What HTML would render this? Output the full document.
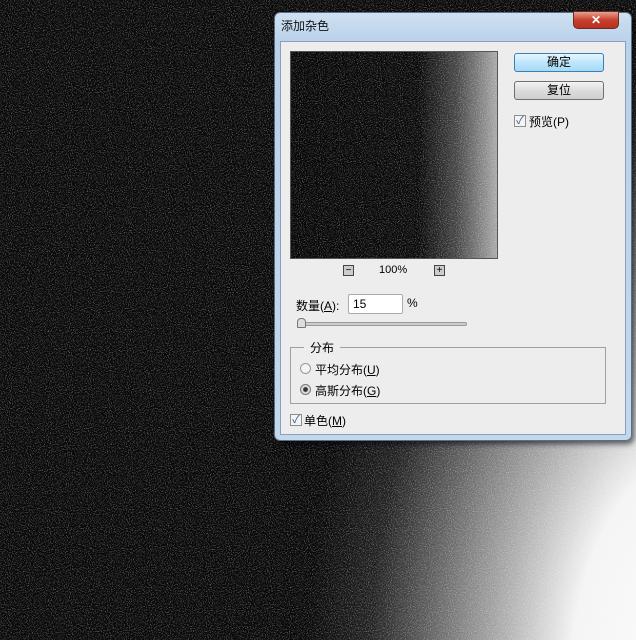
<!DOCTYPE html>
<html><head><meta charset="utf-8"><style>
*{margin:0;padding:0;box-sizing:border-box}
html,body{width:636px;height:640px;overflow:hidden}
body{position:relative;background:#0a0a0a;font-family:"Liberation Sans","Noto Sans CJK SC",sans-serif;font-size:12px;color:#000}
#bg{position:absolute;left:0;top:0;width:636px;height:640px;background:radial-gradient(ellipse 450px 720px at 720px 680px,#fff 0%,#f4f4f4 33%,#888 57%,#222 78%,#080808 92%)}
svg.noise{position:absolute;left:0;top:0}
.dlg{position:absolute;left:274px;top:12px;width:358px;height:429px;border-radius:6px;background:linear-gradient(#cfe0f1,#b9d1ea 30px,#c4d8ed);border:1px solid #5a6f86;box-shadow:2px 3px 6px rgba(0,0,0,.6)}
.title{position:absolute;left:6px;top:4px;font-size:12px;color:#111}
.close{position:absolute;left:298px;top:-2px;width:46px;height:18px;border-radius:0 0 5px 5px;background:linear-gradient(#e8a090,#c7402a 50%,#b83020);border:1px solid #6b2a20;color:#fff;text-align:center;font-weight:bold;font-size:12px;line-height:16px}
.client{position:absolute;left:5px;top:28px;width:346px;height:394px;background:#ededed;border:1px solid #8aa0b8}
.preview{position:absolute;left:9px;top:9px;width:208px;height:208px;border:1px solid #555;background:linear-gradient(90deg,#060606 0%,#0a0a0a 62%,#444 80%,#aaa 100%);overflow:hidden}
.btn{position:absolute;left:233px;width:90px;height:19px;border:1px solid #707070;border-radius:3px;background:linear-gradient(#f3f3f3,#dcdcdc 50%,#cfcfcf);text-align:center;line-height:17px;font-size:12px}
.btn.def{border-color:#3c7fb1;background:linear-gradient(#eaf6fd,#bee6fd 50%,#a7d9f5)}
.cb{position:absolute;width:12px;height:12px;border:1px solid #8f8f8f;background:#f4f4f4;font-size:11px;line-height:10px;text-align:center;color:#3a5a80}
.t{position:absolute;white-space:nowrap}
.sq{position:absolute;width:11px;height:11px;border:1px solid #444;background:#ccc;font-size:10px;line-height:9px;text-align:center}
</style></head><body>
<div id="bg"></div>
<svg class="noise" width="636" height="640"><filter id="n"><feTurbulence type="fractalNoise" baseFrequency="0.95" numOctaves="2" seed="3"/><feColorMatrix values="0 0 0 0 1  0 0 0 0 1  0 0 0 0 1  0 0 0 4 -2.0"/></filter><rect width="636" height="640" filter="url(#n)" opacity="0.35"/></svg>
<div class="t" style="left:572px;top:11px;color:#ccc;font-size:9px;width:64px;overflow:hidden">思缘设计论坛</div>
<div class="dlg">
 <div class="title">添加杂色</div>
 <div class="close">✕</div>
 <div class="client">
  <div class="preview"><svg width="208" height="208"><filter id="n2"><feTurbulence type="fractalNoise" baseFrequency="0.95" numOctaves="2" seed="5"/><feColorMatrix values="0 0 0 0 1  0 0 0 0 1  0 0 0 0 1  0 0 0 4 -2.0"/></filter><rect width="208" height="208" filter="url(#n2)" opacity="0.35"/></svg></div>
  <div class="btn def" style="top:11px">确定</div>
  <div class="btn" style="top:39px">复位</div>
  <div class="cb" style="left:233px;top:73px">✓</div>
  <div class="t" style="left:248px;top:71px">预览(P)</div>
  <div class="sq" style="left:62px;top:223px">−</div>
  <div class="t" style="left:98px;top:222px;font-size:11px">100%</div>
  <div class="sq" style="left:153px;top:223px">+</div>
  <div class="t" style="left:15px;top:255px">数量(<u>A</u>):</div>
  <div style="position:absolute;left:67px;top:252px;width:55px;height:20px;border:1px solid #aab;background:#fff;border-radius:2px;padding:2px 4px">15</div>
  <div class="t" style="left:126px;top:254px">%</div>
  <div style="position:absolute;left:16px;top:280px;width:170px;height:4px;border:1px solid #999;border-radius:2px;background:#ccc"></div>
  <div style="position:absolute;left:16px;top:276px;width:9px;height:10px;background:#ddd;border:1px solid #777;border-radius:4px 4px 1px 1px"></div>
  <div style="position:absolute;left:9px;top:305px;width:316px;height:57px;border:1px solid #a0a0a0"></div>
  <div class="t" style="left:23px;top:297px;background:#ededed;padding:0 6px">分布</div>
  <div style="position:absolute;left:19px;top:321px;width:11px;height:11px;border-radius:50%;border:1px solid #999;background:#f4f4f4"></div>
  <div class="t" style="left:34px;top:319px">平均分布(<u>U</u>)</div>
  <div style="position:absolute;left:19px;top:342px;width:11px;height:11px;border-radius:50%;border:1px solid #777;background:radial-gradient(#333 30%,#ddd 45%)"></div>
  <div class="t" style="left:34px;top:340px">高斯分布(<u>G</u>)</div>
  <div class="cb" style="left:9px;top:372px">✓</div>
  <div class="t" style="left:23px;top:370px">单色(<u>M</u>)</div>
 </div>
</div>
</body></html>
